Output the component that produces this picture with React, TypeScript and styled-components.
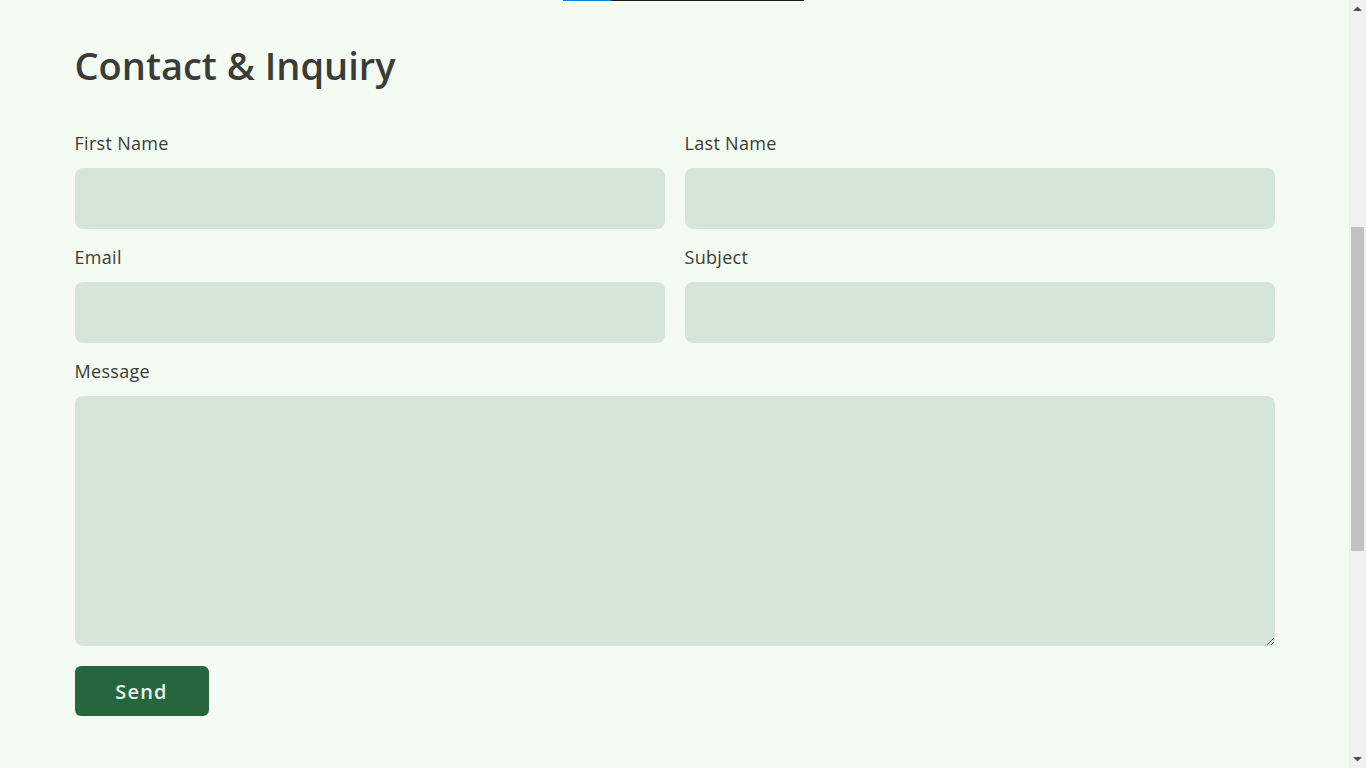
import React, { useLayoutEffect } from "react";
import styled, { createGlobalStyle } from "styled-components";

const GlobalStyle = createGlobalStyle`
  html, body {
    margin: 0;
    padding: 0;
    background: #f4fbf3;
  }
  body {
    font-family: "Open Sans", "Liberation Sans", sans-serif;
    color: #3b3b37;
  }
  * { box-sizing: border-box; }
`;

const Page = styled.div`
  display: flex;
  flex-direction: column;
  margin-right: 17px;
`;

const TopSection = styled.section`
  height: 499px;
  display: flex;
  align-items: flex-end;
  justify-content: center;
`;

const TopInner = styled.div`
  width: 1200px;
  display: flex;
`;

const ProgressTrack = styled.div`
  margin-left: 488px;
  width: 241px;
  height: 2px;
  background: #1b1b1b;
  display: flex;
`;

const ProgressFill = styled.div`
  width: 48px;
  height: 100%;
  background: #0a84dc;
`;

const Main = styled.main`
  display: flex;
  justify-content: center;
  padding: 42px 0 526px;
`;

const Container = styled.div`
  width: 1200px;
  display: flex;
  flex-direction: column;
`;

const Title = styled.h2`
  margin: 0 0 44px;
  font-size: 38px;
  line-height: 44px;
  font-weight: 600;
  color: #3b3b37;
`;

const Form = styled.form`
  display: grid;
  grid-template-columns: 1fr 1fr;
  column-gap: 20px;
  row-gap: 16px;
`;

const Field = styled.div<{ $full?: boolean }>`
  display: flex;
  flex-direction: column;
  grid-column: ${(p) => (p.$full ? "1 / -1" : "auto")};
`;

const Label = styled.label`
  font-size: 18px;
  line-height: 25px;
  font-weight: 400;
  letter-spacing: 0.3px;
  color: #3b3b37;
  margin-bottom: 12px;
`;

const Input = styled.input`
  height: 61px;
  border: none;
  border-radius: 8px;
  background: #d7e5d9;
  padding: 0 16px;
  font: inherit;
  outline: none;
`;

const TextArea = styled.textarea`
  height: 250px;
  border: none;
  border-radius: 8px;
  background: #d7e5d9;
  padding: 16px;
  font: inherit;
  outline: none;
  resize: vertical;
  display: block;
`;

const Actions = styled.div`
  grid-column: 1 / -1;
  padding-top: 4px;
`;

const SendButton = styled.button`
  width: 134px;
  height: 50px;
  border: none;
  border-radius: 6px;
  background: #25663e;
  color: #e9f2ea;
  font-family: inherit;
  font-size: 20px;
  font-weight: 600;
  letter-spacing: 1.2px;
  cursor: pointer;
`;

/* Overlay replica of the browser's classic scrollbar */
const ScrollRail = styled.div`
  position: fixed;
  top: 0;
  right: 0;
  width: 17px;
  height: 100vh;
  background: #f1f1f1;
  display: flex;
  flex-direction: column;
  align-items: center;
`;

const ArrowButton = styled.div`
  width: 17px;
  height: 17px;
  display: flex;
  align-items: center;
  justify-content: center;
`;

const TrackArea = styled.div`
  flex: 1;
  width: 100%;
  position: relative;
`;

const Thumb = styled.div`
  position: absolute;
  left: 2px;
  width: 13px;
  background: #c1c1c1;
`;

export default function App() {
  useLayoutEffect(() => {
    if ("scrollRestoration" in history) history.scrollRestoration = "manual";
    window.scrollTo(0, 498);
    const t = setTimeout(() => window.scrollTo(0, 498), 50);
    return () => clearTimeout(t);
  }, []);

  return (
    <>
      <GlobalStyle />
      <Page>
        <TopSection>
          <TopInner>
            <ProgressTrack>
              <ProgressFill />
            </ProgressTrack>
          </TopInner>
        </TopSection>
        <Main>
          <Container>
            <Title>Contact &amp; Inquiry</Title>
            <Form onSubmit={(e) => e.preventDefault()}>
              <Field>
                <Label htmlFor="first">First Name</Label>
                <Input id="first" type="text" />
              </Field>
              <Field>
                <Label htmlFor="last">Last Name</Label>
                <Input id="last" type="text" />
              </Field>
              <Field>
                <Label htmlFor="email">Email</Label>
                <Input id="email" type="email" />
              </Field>
              <Field>
                <Label htmlFor="subject">Subject</Label>
                <Input id="subject" type="text" />
              </Field>
              <Field $full>
                <Label htmlFor="message">Message</Label>
                <TextArea id="message" />
              </Field>
              <Actions>
                <SendButton type="submit">Send</SendButton>
              </Actions>
            </Form>
          </Container>
        </Main>
      </Page>
      <ScrollRail aria-hidden>
        <ArrowButton>
          <svg width="9" height="5" viewBox="0 0 9 5">
            <path d="M0 5 L4.5 0.5 L9 5 Z" fill="#505050" />
          </svg>
        </ArrowButton>
        <TrackArea>
          <Thumb style={{ top: 210, height: 324 }} />
        </TrackArea>
        <ArrowButton>
          <svg width="9" height="5" viewBox="0 0 9 5">
            <path d="M0 0 L4.5 4.5 L9 0 Z" fill="#505050" />
          </svg>
        </ArrowButton>
      </ScrollRail>
    </>
  );
}
